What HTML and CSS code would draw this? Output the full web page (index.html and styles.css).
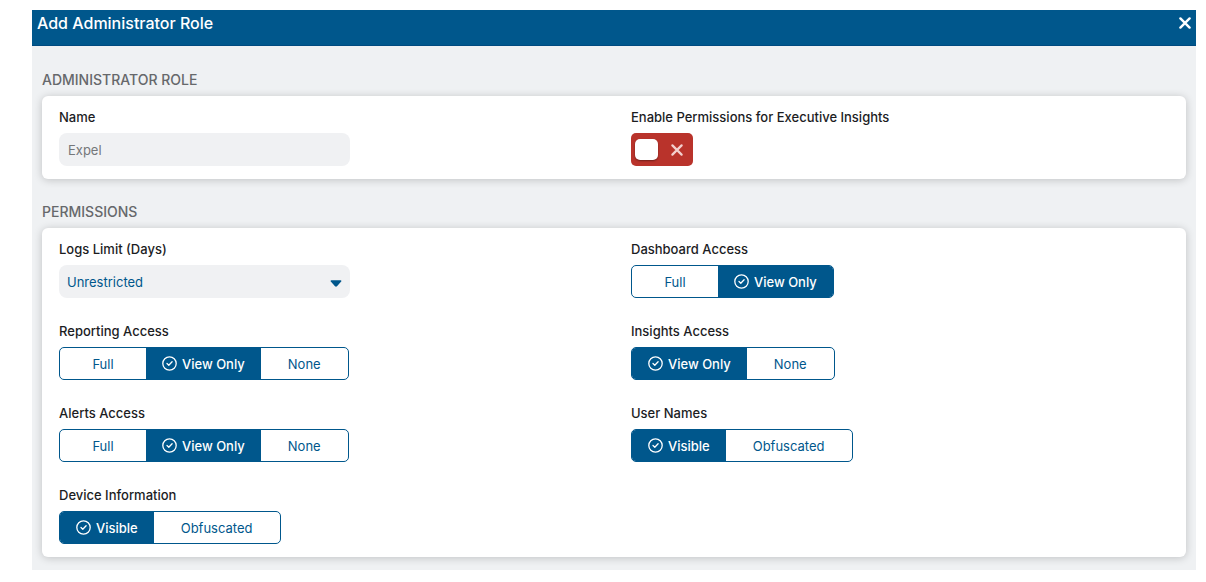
FILE: index.html
```html
<!DOCTYPE html>
<html lang="en">
<head>
    <meta charset="UTF-8">
    <title>Add Administrator Role</title>
    <meta name="viewport" content="width=device-width, initial-scale=1.0">
    <link rel="stylesheet" href="styles.css">
</head>
<body>

    <svg class="sprite" aria-hidden="true">
        <symbol id="check" viewBox="0 0 15 15">
            <circle cx="7.5" cy="7.5" r="6.7" />
            <path d="M5 7.5l1.8 1.7 3.3-3.4" />
        </symbol>
        <symbol id="cross" viewBox="0 0 12 12">
            <path d="M1.4 1.4l9.2 9.2M10.6 1.4l-9.2 9.2" />
        </symbol>
    </svg>

    <main class="dialog">
        <header class="dialog-header">
            <h1>Add Administrator Role</h1>
            <button class="close" type="button" aria-label="Close"><svg><use href="#cross" /></svg></button>
        </header>

        <form class="dialog-body">
            <h2>ADMINISTRATOR ROLE</h2>
            <section class="card">
                <div class="field">
                    <label class="field-label" for="name">Name</label>
                    <input class="text-input" id="name" type="text" value="Expel">
                </div>
                <div class="field">
                    <label class="field-label" for="insightsToggle">Enable Permissions for Executive Insights</label>
                    <span class="toggle">
                        <input id="insightsToggle" type="checkbox">
                        <span class="knob"></span>
                        <svg><use href="#cross" /></svg>
                    </span>
                </div>
            </section>

            <h2>PERMISSIONS</h2>
            <section class="card">
                <div class="field">
                    <label class="field-label" for="logs">Logs Limit (Days)</label>
                    <div class="select-wrap">
                        <select id="logs">
                            <option>Unrestricted</option>
                        </select>
                        <svg viewBox="0 0 12 7"><path d="M1.4 0.3h9.2c.8 0 1.1.8.6 1.3L7 6.2c-.6.6-1.4.6-2 0L.8 1.6C.3 1.1.6.3 1.4.3z" /></svg>
                    </div>
                </div>
                <div class="field" role="radiogroup" aria-labelledby="dashboardLabel">
                    <span class="field-label" id="dashboardLabel">Dashboard Access</span>
                    <div class="segments">
                        <label><input type="radio" name="dashboard">Full</label>
                        <label><input type="radio" name="dashboard" checked><svg><use href="#check" /></svg>View Only</label>
                    </div>
                </div>
                <div class="field" role="radiogroup" aria-labelledby="reportingLabel">
                    <span class="field-label" id="reportingLabel">Reporting Access</span>
                    <div class="segments">
                        <label><input type="radio" name="reporting">Full</label>
                        <label><input type="radio" name="reporting" checked><svg><use href="#check" /></svg>View Only</label>
                        <label><input type="radio" name="reporting">None</label>
                    </div>
                </div>
                <div class="field" role="radiogroup" aria-labelledby="insightsLabel">
                    <span class="field-label" id="insightsLabel">Insights Access</span>
                    <div class="segments">
                        <label><input type="radio" name="insights" checked><svg><use href="#check" /></svg>View Only</label>
                        <label><input type="radio" name="insights">None</label>
                    </div>
                </div>
                <div class="field" role="radiogroup" aria-labelledby="alertsLabel">
                    <span class="field-label" id="alertsLabel">Alerts Access</span>
                    <div class="segments">
                        <label><input type="radio" name="alerts">Full</label>
                        <label><input type="radio" name="alerts" checked><svg><use href="#check" /></svg>View Only</label>
                        <label><input type="radio" name="alerts">None</label>
                    </div>
                </div>
                <div class="field" role="radiogroup" aria-labelledby="usersLabel">
                    <span class="field-label" id="usersLabel">User Names</span>
                    <div class="segments">
                        <label><input type="radio" name="users" checked><svg><use href="#check" /></svg>Visible</label>
                        <label><input type="radio" name="users">Obfuscated</label>
                    </div>
                </div>
                <div class="field" role="radiogroup" aria-labelledby="deviceLabel">
                    <span class="field-label" id="deviceLabel">Device Information</span>
                    <div class="segments">
                        <label><input type="radio" name="device" checked><svg><use href="#check" /></svg>Visible</label>
                        <label><input type="radio" name="device">Obfuscated</label>
                    </div>
                </div>
            </section>
        </form>
    </main>

</body>
</html>
```
FILE: styles.css
```css
* {
    box-sizing: border-box;
}

body {
    margin: 0;
    padding: 10px 10px 12px 32px;
    background: #fff;
    color: #1c1d1f;
    font-family: Inter, "Liberation Sans", sans-serif;
    font-size: 13px;
    line-height: 20px;
}

.sprite {
    display: none;
}

svg {
    fill: none;
    stroke: currentColor;
    stroke-linecap: round;
    stroke-linejoin: round;
}

.dialog {
    background: #eff1f3;
}

.dialog-header {
    display: flex;
    align-items: flex-start;
    justify-content: space-between;
    height: 36px;
    padding: 3px 5px;
    background: #00578c;
    border-bottom: 1px solid #004a80;
    color: #fff;
}

h1 {
    margin: 0;
    font-size: 16px;
    font-weight: 500;
    line-height: 20px;
}

.close {
    display: flex;
    align-items: center;
    height: 20px;
    padding: 0;
    border: 0;
    background: none;
    color: #fff;
    cursor: pointer;
}

.close svg {
    width: 12px;
    height: 12px;
    stroke-width: 2.4;
}

.dialog-body {
    padding: 24px 10px 13px;
}

h2 {
    margin: 0 0 6px;
    color: #66686b;
    font-size: 14px;
    font-weight: 500;
    line-height: 20px;
}

.card + h2 {
    margin-top: 23px;
}

.card {
    display: grid;
    grid-template-columns: 1fr 1fr;
    row-gap: 23px;
    padding: 11px 0 13px;
    background: #fff;
    border-radius: 6px;
    box-shadow: 0 1px 8px rgba(0, 0, 0, 0.2);
}

.field {
    display: flex;
    flex-direction: column;
    align-items: flex-start;
    gap: 6px;
    padding: 0 17px;
}

.field-label {
    font-weight: 500;
}

.text-input,
.select-wrap {
    width: 100%;
    max-width: 291px;
    height: 33px;
    border-radius: 8px;
    background: #f0f1f3;
}

.text-input {
    padding: 0 9px;
    border: 0;
    color: #75777a;
    font: inherit;
}

.select-wrap {
    display: flex;
    align-items: center;
    padding-right: 8px;
}

.select-wrap select {
    flex: 1;
    height: 33px;
    padding: 0 8px;
    border: 0;
    appearance: none;
    background: none;
    color: #00578c;
    font: inherit;
}

.select-wrap svg {
    width: 12px;
    height: 7px;
    margin-top: 4px;
    fill: #00578c;
    stroke: none;
}

.toggle {
    position: relative;
    display: flex;
    align-items: center;
    justify-content: space-between;
    width: 62px;
    height: 33px;
    padding: 0 10px 0 4px;
    border-radius: 5px;
    background: #b9332b;
    color: #f3d0ce;
}

.toggle input,
.segments input {
    position: absolute;
    inset: 0;
    width: 100%;
    height: 100%;
    margin: 0;
    opacity: 0;
    cursor: pointer;
}

.knob {
    width: 23px;
    height: 21px;
    border-radius: 5px;
    background: #fff;
    box-shadow: 0 1px 2px rgba(0, 0, 0, 0.4);
}

.toggle svg {
    width: 12px;
    height: 12px;
    stroke-width: 2.2;
}

.segments {
    display: flex;
    height: 33px;
    overflow: hidden;
    border: 1px solid #00578c;
    border-radius: 5px;
}

.segments label {
    position: relative;
    display: flex;
    align-items: center;
    justify-content: center;
    gap: 5px;
    min-width: 86px;
    padding: 0 27px;
    color: #00578c;
}

.segments label:has(:checked) {
    padding: 0 16px;
    background: #00578c;
    color: #fff;
    font-weight: 500;
}

.segments svg {
    width: 15px;
    height: 15px;
    stroke-width: 1.3;
}
```
